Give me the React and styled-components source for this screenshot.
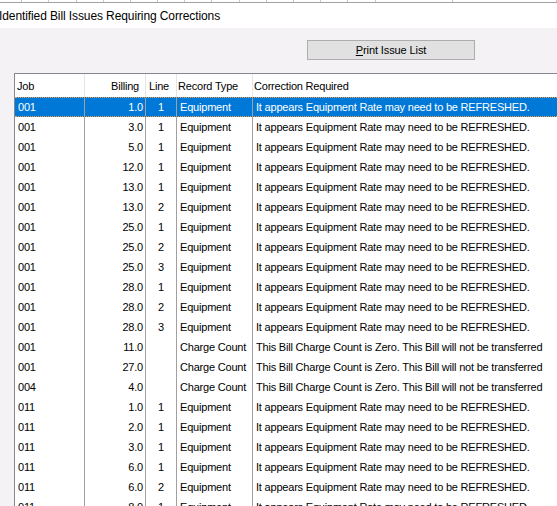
import styled, { createGlobalStyle } from 'styled-components';

const GlobalStyle = createGlobalStyle`
  html, body {
    margin: 0;
    padding: 0;
    width: 557px;
    height: 506px;
    overflow: hidden;
    background: #f5f2f5;
  }
`;

const Page = styled.div`
  width: 557px;
  height: 506px;
  overflow: hidden;
  display: flex;
  flex-direction: column;
  font-family: "Liberation Sans", Arial, sans-serif;
`;

const TopStrip = styled.div`
  display: flex;
  flex-shrink: 0;
  height: 2px;
  background: #fff;
  border-bottom: 1px solid #a0a0a0;
`;

const StripCell = styled.div`
  flex: 0 0 ${p => p.w}px;
  box-sizing: border-box;
  border-right: 1px solid #c8c8c8;
`;

const TitleBar = styled.div`
  flex-shrink: 0;
  height: 25px;
  background: #fff;
  display: flex;
  align-items: center;
  font-family: "Liberation Sans", Arial, sans-serif;
  font-size: 12px;
  letter-spacing: -0.1px;
  color: #000;
  margin-left: -1px;
`;

const Panel = styled.div`
  flex: 1 0 auto;
  background: #f5f2f5;
  padding: 12px 0 0 14px;
  display: flex;
  flex-direction: column;
`;

const ButtonRow = styled.div`
  display: flex;
  flex-shrink: 0;
  padding-left: 293px;
  height: 20px;
  margin-bottom: 13px;
`;

const Button = styled.button`
  width: 168px;
  height: 20px;
  box-sizing: border-box;
  background: #e1e1e1;
  border: 1px solid #adadad;
  font-family: "Liberation Sans", Arial, sans-serif;
  font-size: 11px;
  letter-spacing: -0.1px;
  color: #000;
  padding: 0;
  u { text-decoration: underline; }
`;

const Grid = styled.div`
  flex: 1 0 auto;
  background: #fff;
  border-left: 1px solid #828790;
  border-top: 1px solid #828790;
  width: 600px;
  font-size: 11px;
  letter-spacing: -0.2px;
`;

const Row = styled.div`
  display: grid;
  grid-template-columns: 70px 61px 31px 76px 1fr;
  height: ${p => (p.header ? 23 : 20)}px;
  box-sizing: border-box;
  background: ${p => (p.selected ? '#0078d7' : '#fff')};
  color: ${p => (p.selected ? '#fff' : '#000')};
  ${p => p.selected && `
    border-top: 1px dotted #f0a040;
    border-bottom: 1px dotted #f0a040;
  `}
`;

const Cell = styled.div`
  box-sizing: border-box;
  display: flex;
  align-items: center;
  white-space: nowrap;
  overflow: hidden;
  border-right: 1px solid ${p => (p.header ? '#e5e5e5' : '#a0a0a0')};
  justify-content: ${p => (p.align === 'right' ? 'flex-end' : p.align === 'center' ? 'center' : 'flex-start')};
  padding: ${p => p.pad || '0 0 0 3px'};
  &:last-child { border-right: none; }
`;

const REFRESH = 'It appears Equipment Rate may need to be REFRESHED.';
const ZERO = 'This Bill Charge Count is Zero. This Bill will not be transferred';

const rows = [
  ['001', '1.0', '1', 'Equipment', REFRESH],
  ['001', '3.0', '1', 'Equipment', REFRESH],
  ['001', '5.0', '1', 'Equipment', REFRESH],
  ['001', '12.0', '1', 'Equipment', REFRESH],
  ['001', '13.0', '1', 'Equipment', REFRESH],
  ['001', '13.0', '2', 'Equipment', REFRESH],
  ['001', '25.0', '1', 'Equipment', REFRESH],
  ['001', '25.0', '2', 'Equipment', REFRESH],
  ['001', '25.0', '3', 'Equipment', REFRESH],
  ['001', '28.0', '1', 'Equipment', REFRESH],
  ['001', '28.0', '2', 'Equipment', REFRESH],
  ['001', '28.0', '3', 'Equipment', REFRESH],
  ['001', '11.0', '', 'Charge Count', ZERO],
  ['001', '27.0', '', 'Charge Count', ZERO],
  ['004', '4.0', '', 'Charge Count', ZERO],
  ['011', '1.0', '1', 'Equipment', REFRESH],
  ['011', '2.0', '1', 'Equipment', REFRESH],
  ['011', '3.0', '1', 'Equipment', REFRESH],
  ['011', '6.0', '1', 'Equipment', REFRESH],
  ['011', '6.0', '2', 'Equipment', REFRESH],
  ['011', '8.0', '1', 'Equipment', REFRESH],
];

const stripWidths = [22, 27, 28, 27, 27, 27, 27, 27, 28, 27, 27, 27, 27, 28, 77, 104];

export default function App() {
  return (
    <Page>
      <GlobalStyle />
      <TopStrip>
        {stripWidths.map((w, i) => <StripCell key={i} w={w} />)}
      </TopStrip>
      <TitleBar>Identified Bill Issues Requiring Corrections</TitleBar>
      <Panel>
        <ButtonRow>
          <Button><u>P</u>rint Issue List</Button>
        </ButtonRow>
        <Grid>
          <Row header>
            <Cell header pad="0 0 0 2px">Job</Cell>
            <Cell header align="right" pad="0 6px 0 0">Billing</Cell>
            <Cell header pad="0 0 0 3px">Line</Cell>
            <Cell header pad="0 0 0 1px">Record Type</Cell>
            <Cell header pad="0 0 0 1px">Correction Required</Cell>
          </Row>
          {rows.map((r, i) => (
            <Row key={i} selected={i === 0}>
              <Cell>{r[0]}</Cell>
              <Cell align="right" pad="0 2px 0 0">{r[1]}</Cell>
              <Cell align="center" pad="0">{r[2]}</Cell>
              <Cell>{r[3]}</Cell>
              <Cell>{r[4]}</Cell>
            </Row>
          ))}
        </Grid>
      </Panel>
    </Page>
  );
}
